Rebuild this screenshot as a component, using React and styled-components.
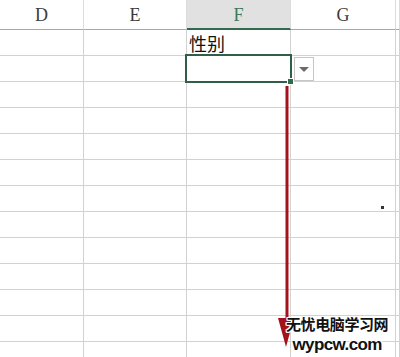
import React from 'react';
import styled, { createGlobalStyle } from 'styled-components';

const GlobalStyle = createGlobalStyle`
    html, body {
        margin: 0;
        padding: 0;
        background: #ffffff;
        overflow: hidden;
    }
`;

const Sheet = styled.div`
    position: relative;
    width: 400px;
    height: 357px;
    overflow: hidden;
    background: #ffffff;
    font-family: 'Noto Sans CJK SC', 'Liberation Sans', sans-serif;
`;

const Grid = styled.div`
    display: grid;
    grid-template-columns: 84px 103px 104px 105px 1fr;
    grid-template-rows: 30px repeat(13, 26px);
`;

const HeadCell = styled.div`
    box-sizing: border-box;
    display: flex;
    align-items: center;
    justify-content: center;
    padding-top: 2px;
    border-right: 1px solid #dcdcdc;
    border-bottom: ${p => (p.active ? '2px solid #2f6b4c' : '1px solid #a8a8a8')};
    background: ${p => (p.active ? '#e1e1e1' : '#ffffff')};
    color: ${p => (p.active ? '#3a7a56' : '#3c3c3c')};
    font-family: 'Liberation Serif', 'DejaVu Serif', serif;
    font-size: 18px;
`;

const Cell = styled.div`
    box-sizing: border-box;
    position: relative;
    display: flex;
    align-items: flex-end;
    padding: 0 0 2px 2px;
    border-right: 1px solid #d2d2d2;
    border-bottom: 1px solid #d2d2d2;
    color: #111111;
    font-size: 18px;
    line-height: 20px;
    white-space: nowrap;

    ${p => p.selected && `
        &::before {
            content: '';
            position: absolute;
            left: -2px;
            top: -2px;
            right: -2px;
            bottom: -2px;
            border: 2px solid #2f5f47;
            z-index: 2;
        }
        &::after {
            content: '';
            position: absolute;
            right: -4px;
            bottom: -4px;
            width: 5px;
            height: 5px;
            background: #2f6b4c;
            border: 1px solid #ffffff;
            z-index: 3;
        }
    `}
`;

const DropButton = styled.div`
    position: absolute;
    left: 107px;
    top: 1px;
    width: 20px;
    height: 24px;
    box-sizing: border-box;
    border: 1px solid #c6c6c6;
    background: #ffffff;
    display: flex;
    align-items: center;
    justify-content: center;
    z-index: 4;

    &::after {
        content: '';
        border-left: 5px solid transparent;
        border-right: 5px solid transparent;
        border-top: 5px solid #6a6a6a;
    }
`;

const Arrow = styled.svg`
    position: absolute;
    left: 270px;
    top: 84px;
    z-index: 5;
`;

const Dot = styled.span`
    position: absolute;
    left: 381px;
    top: 206px;
    width: 3px;
    height: 3px;
    background: #333333;
`;

const Watermark = styled.div`
    position: absolute;
    left: 286px;
    top: 315px;
    display: flex;
    flex-direction: column;
    align-items: center;
    gap: 3px;
    z-index: 6;
    color: #111111;
    font-weight: bold;
    text-shadow: -1px -1px 0 #fff, 1px -1px 0 #fff, -1px 1px 0 #fff, 1px 1px 0 #fff,
        0 1px 0 #fff, 0 -1px 0 #fff, 1px 0 0 #fff, -1px 0 0 #fff;
`;

const MarkTitle = styled.div`
    font-family: 'Noto Sans CJK SC', sans-serif;
    font-size: 15px;
    line-height: 18px;
    letter-spacing: -0.4px;
`;

const MarkUrl = styled.div`
    font-family: 'Liberation Sans', 'Arial', sans-serif;
    font-size: 17px;
    line-height: 17px;
    letter-spacing: -0.6px;
`;

const columns = ['D', 'E', 'F', 'G', ''];
const ROWS = 13;

const App = () => {
    const rows = [];
    for (let r = 0; r < ROWS; r++) {
        columns.forEach((col, c) => {
            const key = `${r}-${c}`;
            if (r === 0 && col === 'F') {
                rows.push(<Cell key={key}>性别</Cell>);
            } else if (r === 1 && col === 'F') {
                rows.push(
                    <Cell key={key} selected>
                        <DropButton />
                    </Cell>
                );
            } else {
                rows.push(<Cell key={key} />);
            }
        });
    }

    return (
        <Sheet>
            <GlobalStyle />
            <Grid>
                {columns.map(col => (
                    <HeadCell key={col || 'x'} active={col === 'F'}>
                        {col}
                    </HeadCell>
                ))}
                {rows}
            </Grid>
            <Arrow width="30" height="266" viewBox="0 0 30 266">
                <line x1="17" y1="2" x2="17" y2="238" stroke="#a3121c" strokeWidth="3" />
                <polygon points="8,234 24,234 16,263" fill="#a3121c" />
            </Arrow>
            <Dot />
            <Watermark>
                <MarkTitle>无忧电脑学习网</MarkTitle>
                <MarkUrl>wypcw.com</MarkUrl>
            </Watermark>
        </Sheet>
    );
};

export default App;
